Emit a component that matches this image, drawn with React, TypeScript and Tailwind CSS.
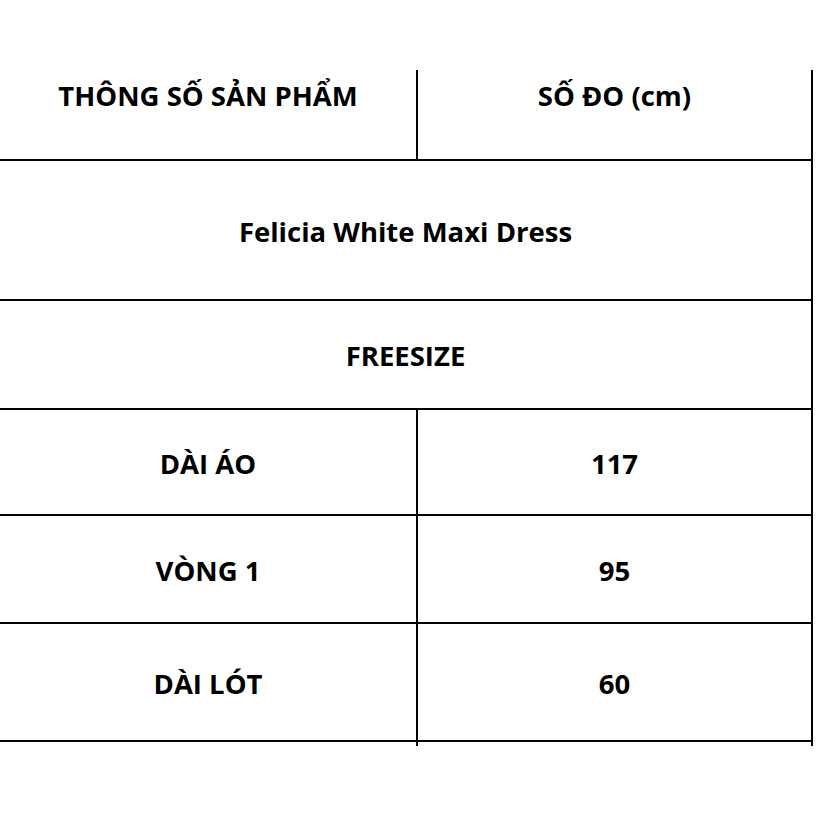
import React from "react";

const font = { fontFamily: '"Open Sans", "Noto Sans", sans-serif' };

export default function App() {
  return (
    <div className="w-[816px] h-[816px] bg-white text-black" style={font}>
      <div className="pt-[70px] w-[813px]">
        <div className="flex h-[91px] border-b-2 border-black">
          <div className="w-[418px] border-r-2 border-black flex justify-center pt-[7px]">
            <span className="text-[27.5px] font-bold leading-[38px]">THÔNG SỐ SẢN PHẨM</span>
          </div>
          <div className="w-[395px] border-r-2 border-black flex justify-center pt-[7px]">
            <span className="text-[27.5px] font-bold leading-[38px]">SỐ ĐO (cm)</span>
          </div>
        </div>
        <div className="flex h-[140px] border-b-2 border-r-2 border-black items-center justify-center pt-[4px]">
          <span className="text-[27.5px] font-bold leading-[38px]">Felicia White Maxi Dress</span>
        </div>
        <div className="flex h-[109px] border-b-2 border-r-2 border-black items-center justify-center pt-[3px]">
          <span className="text-[27.5px] font-bold leading-[38px]">FREESIZE</span>
        </div>
        {[
          ["DÀI ÁO", "117", "h-[106px]"],
          ["VÒNG 1", "95", "h-[108px]"],
          ["DÀI LÓT", "60", "h-[118px]"],
        ].map(([a, b, h]) => (
          <div key={a} className={`flex border-b-2 border-black ${h}`}>
            <div className="w-[418px] border-r-2 border-black flex items-center justify-center pt-[3px]">
              <span className="text-[27.5px] font-bold leading-[38px]">{a}</span>
            </div>
            <div className="w-[395px] border-r-2 border-black flex items-center justify-center pt-[3px]">
              <span className="text-[27.5px] font-bold leading-[38px]">{b}</span>
            </div>
          </div>
        ))}
        <div className="flex h-[4px]">
          <div className="w-[418px] border-r-2 border-black" />
          <div className="w-[395px] border-r-2 border-black" />
        </div>
      </div>
    </div>
  );
}
